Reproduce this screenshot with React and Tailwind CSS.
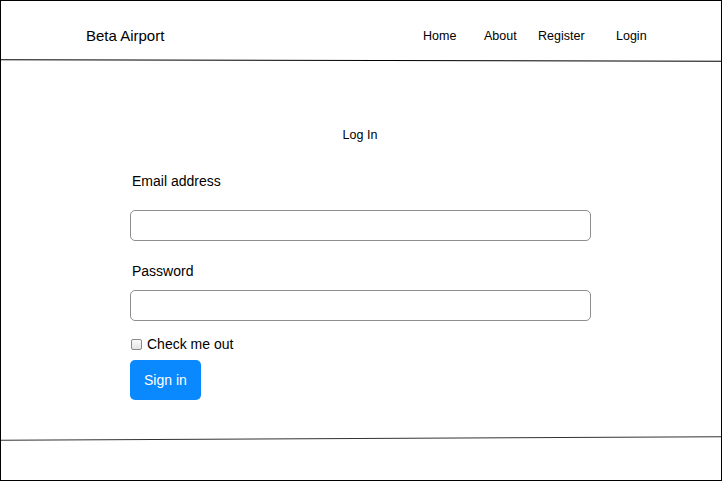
import React from 'react';

const navLinks = [
  { label: 'Home', width: 'w-[61px]' },
  { label: 'About', width: 'w-[54px]' },
  { label: 'Register', width: 'w-[78px]' },
  { label: 'Login', width: 'w-[60px]' },
];

const Header = () => (
  <header className="h-[59px] flex items-start pt-[26px] pl-[85px]">
    <span className="w-[337px] text-[15px] leading-[17px] text-black">Beta Airport</span>
    <nav className="flex items-start pt-[2px]">
      {navLinks.map(link => (
        <a key={link.label} href="#" className={`${link.width} text-[12.5px] leading-[15px] text-black`}>
          {link.label}
        </a>
      ))}
    </nav>
  </header>
);

const inputCls = 'w-[461px] h-[31px] border border-[#8e8e8e] rounded-[5px] bg-white px-2 outline-none';

const LoginForm = () => (
  <section className="flex-1 flex flex-col">
    <h1 className="mt-[67px] pr-[2px] text-center text-[12.5px] leading-[15px] text-black font-normal">Log In</h1>

    <form className="pl-[129px] flex flex-col" onSubmit={e => e.preventDefault()}>
      <div className="mt-[30px] flex flex-col">
        <label className="pl-[2px] text-[14px] leading-[17px] text-black">Email address</label>
        <input type="email" className={`mt-[20px] ${inputCls}`} />
      </div>

      <div className="mt-[22px] flex flex-col">
        <label className="pl-[2px] text-[14px] leading-[17px] text-black">Password</label>
        <input type="password" className={`mt-[10px] ${inputCls}`} />
      </div>

      <label className="mt-[15px] flex items-center h-[17px]">
        <span className="ml-[1px] w-[11px] h-[11px] border border-[#8a8a8a] rounded-[2px] bg-gradient-to-b from-[#fafafa] to-[#e4e4e4]" />
        <span className="ml-[5px] text-[14px] leading-[17px] text-black">Check me out</span>
      </label>

      <button
        type="submit"
        className="mt-[7px] w-[71px] h-[40px] rounded-[5px] bg-[#0a88fd] text-white text-[14px] leading-[17px] text-left pl-[14px]"
      >
        Sign in
      </button>
    </form>
  </section>
);

export default function App() {
  return (
    <div className="w-[722px] h-[481px] border border-black bg-white flex flex-col overflow-hidden" style={{ fontFamily: '"Liberation Sans", Arial, sans-serif' }}>
      <Header />
      <div className="h-px bg-black rotate-[0.12deg]" />
      <LoginForm />
      <div className="h-px bg-[#333] -rotate-[0.28deg]" />
      <footer className="h-[41px]" />
    </div>
  );
}
